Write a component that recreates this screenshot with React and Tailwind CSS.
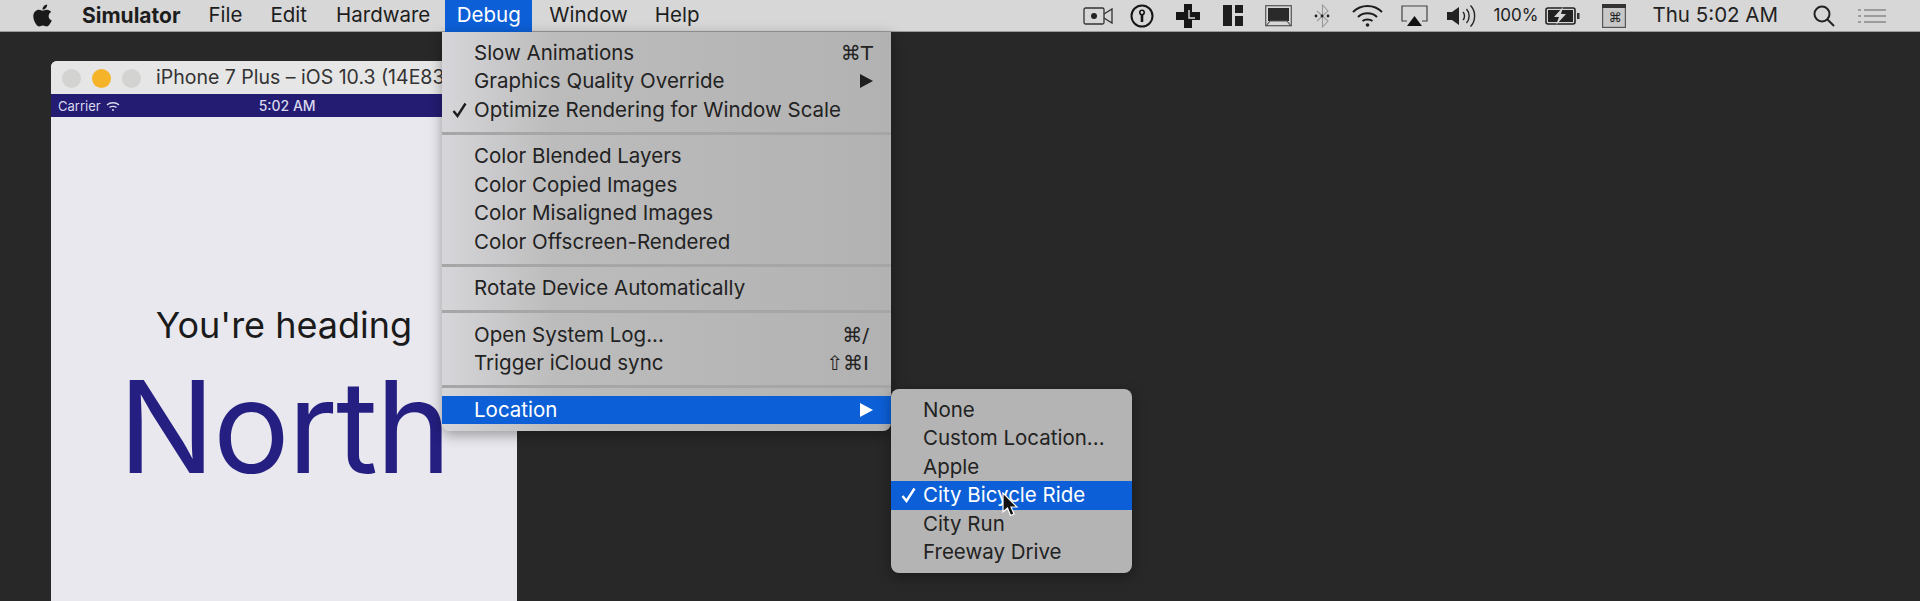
import React from 'react';
import { FaApple } from 'react-icons/fa';

const leftMenus = [
  { label: 'File', className: 'ml-[28px]' },
  { label: 'Edit', className: 'ml-[28px]' },
  { label: 'Hardware', className: 'ml-[29px]' },
];

const debugGroups = [
  [
    { label: 'Slow Animations', shortcut: '⌘T' },
    { label: 'Graphics Quality Override', arrow: true },
    { label: 'Optimize Rendering for Window Scale', checked: true },
  ],
  [
    { label: 'Color Blended Layers' },
    { label: 'Color Copied Images' },
    { label: 'Color Misaligned Images' },
    { label: 'Color Offscreen-Rendered' },
  ],
  [{ label: 'Rotate Device Automatically' }],
  [
    { label: 'Open System Log...', shortcut: '⌘/', shortcutClass: 'mr-[4px]' },
    { label: 'Trigger iCloud sync', shortcut: '⇧⌘I', shortcutClass: 'mr-[4px]' },
  ],
  [{ label: 'Location', arrow: true, active: true }],
];

const locations = [
  { label: 'None' },
  { label: 'Custom Location...' },
  { label: 'Apple' },
  { label: 'City Bicycle Ride', checked: true, active: true },
  { label: 'City Run' },
  { label: 'Freeway Drive' },
];

const Check = ({ color }) => (
  <svg width="15" height="16" viewBox="0 0 15 16" className="absolute left-[10px] top-[6px]">
    <path d="M1.5 9 L5.5 14 L13.5 1.5" fill="none" stroke={color} strokeWidth="2.4" />
  </svg>
);

const MenuRow = ({ item, textLeft }) => (
  <div
    className={`relative flex h-[28.5px] items-center justify-between pr-[18px] ${
      item.active ? 'bg-[#0c5fd6] text-white' : 'text-[#222222]'
    }`}
    style={{ paddingLeft: textLeft }}
  >
    {item.checked && <Check color={item.active ? '#ffffff' : '#1c1c1c'} />}
    <span>{item.label}</span>
    {item.shortcut && (
      <span className={`font-['DejaVu_Sans',sans-serif] text-[20px] leading-none ${item.shortcutClass || ''}`}>
        {item.shortcut}
      </span>
    )}
    {item.arrow && (
      <svg width="13" height="14" viewBox="0 0 13 14">
        <path d="M0 0 L13 7 L0 14 Z" fill={item.active ? '#ffffff' : '#1e1e1e'} />
      </svg>
    )}
  </div>
);

const CameraIcon = () => (
  <svg width="30" height="22" viewBox="0 0 30 22" fill="none" stroke="#333" strokeWidth="1.3">
    <rect x="1" y="3" width="20" height="16" rx="1.5" />
    <circle cx="11" cy="11" r="3" fill="#222" stroke="none" />
    <path d="M21 9 L29 4 V18 L21 13" />
  </svg>
);

const KeyholeIcon = () => (
  <svg width="24" height="24" viewBox="0 0 24 24" fill="none" stroke="#151515">
    <circle cx="12" cy="12" r="10.5" strokeWidth="2" />
    <circle cx="12" cy="8.5" r="2.2" strokeWidth="1.6" />
    <path d="M12 11 V18" strokeWidth="2.6" />
  </svg>
);

const ClockPlusIcon = () => (
  <svg width="24" height="24" viewBox="0 0 24 24">
    <path d="M8 0 H16 V8 H24 V16 H16 V24 H8 V16 H0 V8 H8 Z" fill="#161616" />
    <path d="M13 6 V14 H19" fill="none" stroke="#d8d8d8" strokeWidth="1.4" />
  </svg>
);

const GridIcon = () => (
  <svg width="20" height="21" viewBox="0 0 20 21" fill="#1d1d1d">
    <rect x="0" y="0" width="9" height="21" />
    <rect x="12" y="0" width="8" height="8" />
    <rect x="12" y="11" width="8" height="10" />
  </svg>
);

const MonitorIcon = () => (
  <svg width="27" height="22" viewBox="0 0 27 22">
    <rect x="0.7" y="0.7" width="25.6" height="20" fill="none" stroke="#555" strokeWidth="1.2" />
    <rect x="3" y="3" width="21" height="13" fill="#2a2a2a" />
    <path d="M1 21 L5 16 H22 L26 21" fill="none" stroke="#555" strokeWidth="1.2" />
  </svg>
);

const BluetoothIcon = () => (
  <svg width="17" height="24" viewBox="0 0 17 24" fill="none">
    <path d="M8.5 1 L14 7 L8.5 12 L14 17 L8.5 23 Z M3 7 L8.5 12 L3 17" stroke="#9a9a9a" strokeWidth="1.1" />
    <circle cx="2" cy="12" r="1.4" fill="#222" />
    <circle cx="8" cy="12" r="1.4" fill="#222" />
    <circle cx="14" cy="12" r="1.4" fill="#222" />
  </svg>
);

const WifiIcon = () => (
  <svg width="31" height="22" viewBox="0 0 31 22" fill="none" stroke="#1e1e1e" strokeWidth="2">
    <path d="M1 7 C9 -1 22 -1 30 7" />
    <path d="M6 12 C11 7 20 7 25 12" />
    <path d="M10.5 16 C13 14 18 14 20.5 16" />
    <circle cx="15.5" cy="20" r="1.8" fill="#1e1e1e" stroke="none" />
  </svg>
);

const AirplayIcon = () => (
  <svg width="27" height="22" viewBox="0 0 27 22">
    <path d="M6 16 H1 V1 H26 V16 H21" fill="none" stroke="#444" strokeWidth="1.2" />
    <path d="M13.5 11 L21 21 H6 Z" fill="#111" />
  </svg>
);

const VolumeIcon = () => (
  <svg width="30" height="24" viewBox="0 0 30 24" fill="none" stroke="#222" strokeWidth="1.4">
    <path d="M1 8 H6 L13 3 V21 L6 16 H1 Z" fill="#222" stroke="none" />
    <path d="M17 8 C19 10 19 14 17 16" />
    <path d="M20.5 5 C24 9 24 15 20.5 19" />
    <path d="M24.5 1.5 C30 7 30 17 24.5 22.5" />
  </svg>
);

const BatteryIcon = () => (
  <svg width="35" height="18" viewBox="0 0 35 18">
    <rect x="1" y="1" width="29" height="16" rx="2" fill="none" stroke="#222" strokeWidth="1.6" />
    <rect x="3" y="3" width="25" height="12" fill="#222" />
    <path d="M18 0 L9 10 H14 L11 18 L21 7 H16 Z" fill="#d8d8d8" />
    <rect x="32" y="6" width="2.5" height="6" fill="#333" />
  </svg>
);

const CommandWindowIcon = () => (
  <svg width="24" height="24" viewBox="0 0 24 24">
    <rect x="0.6" y="0.6" width="22.8" height="22.8" fill="#c8c8c8" stroke="#555" strokeWidth="1.2" />
    <rect x="0" y="0" width="24" height="4" fill="#333" />
    <path d="M8 7 H16 V19 H8 Z" fill="#bdbdbd" />
    <text x="13" y="18" textAnchor="middle" fontSize="13" fontFamily="DejaVu Sans" fill="#222">⌘</text>
  </svg>
);

const SearchIcon = () => (
  <svg width="22" height="22" viewBox="0 0 22 22" fill="none" stroke="#222" strokeWidth="2">
    <circle cx="9" cy="9" r="7.5" />
    <path d="M14.5 14.5 L21 21" />
  </svg>
);

const ListIcon = () => (
  <svg width="28" height="16" viewBox="0 0 28 16" fill="#9c9c9c">
    <rect x="0" y="1" width="3" height="2" />
    <rect x="0" y="7" width="3" height="2" />
    <rect x="0" y="13" width="3" height="2" />
    <rect x="6" y="1" width="22" height="2" />
    <rect x="6" y="7" width="22" height="2" />
    <rect x="6" y="13" width="22" height="2" />
  </svg>
);

const App = () => {
  return (
    <div className="relative h-[601px] w-[1920px] overflow-hidden bg-[#282828] font-['Inter',sans-serif] text-[20.5px] leading-none">
      {/* Menu bar */}
      <div className="flex h-[32px] items-center border-b border-[#9a9a9a] bg-[#d7d7d7] text-[#1d1d1d]">
        <FaApple className="ml-[30px] text-[25px] text-[#1a1a1a]" />
        <span className="ml-[27px] text-[21px] font-bold">Simulator</span>
        {leftMenus.map((menu) => (
          <span key={menu.label} className={menu.className}>{menu.label}</span>
        ))}
        <span className="ml-[15px] flex h-[32px] w-[87px] items-center justify-center bg-[#0c5fd6] text-white">Debug</span>
        <span className="ml-[17px]">Window</span>
        <span className="ml-[27px]">Help</span>

        <div className="ml-auto flex items-center text-[#222222]">
          <CameraIcon />
          <span className="ml-[17px]"><KeyholeIcon /></span>
          <span className="ml-[22px]"><ClockPlusIcon /></span>
          <span className="ml-[23px]"><GridIcon /></span>
          <span className="ml-[22px]"><MonitorIcon /></span>
          <span className="ml-[22px]"><BluetoothIcon /></span>
          <span className="ml-[21px]"><WifiIcon /></span>
          <span className="ml-[18px]"><AirplayIcon /></span>
          <span className="ml-[18px]"><VolumeIcon /></span>
          <span className="ml-[17px] text-[17px]">100%</span>
          <span className="ml-[6px]"><BatteryIcon /></span>
          <span className="ml-[22px]"><CommandWindowIcon /></span>
          <span className="ml-[27px] whitespace-nowrap">Thu 5:02 AM</span>
          <span className="ml-[35px]"><SearchIcon /></span>
          <span className="ml-[23px] mr-[34px]"><ListIcon /></span>
        </div>
      </div>

      {/* Simulator window */}
      <div className="ml-[51px] mt-[29px] h-[540px] w-[466px] overflow-hidden rounded-t-[6px] bg-[#e8e8ee]">
        <div className="flex h-[33px] items-center bg-[#e6e6e6] pl-[11px] pt-[1px]">
          <span className="h-[19px] w-[19px] rounded-full bg-[#d3d3d1]" />
          <span className="ml-[11px] h-[19px] w-[19px] rounded-full bg-[#f5b32a]" />
          <span className="ml-[11px] h-[19px] w-[19px] rounded-full bg-[#d3d3d1]" />
          <span className="ml-[15px] whitespace-nowrap text-[19.5px] text-[#333333]">iPhone 7 Plus – iOS 10.3 (14E8301)</span>
        </div>
        <div className="flex h-[23px] items-center bg-[#241c73] pl-[7px] pt-[1px] text-[13px] text-[#d9d9ee]">
          <span>Carrier</span>
          <svg width="14" height="11" viewBox="0 0 14 11" className="ml-[5px]" fill="none" stroke="#d9d9ee" strokeWidth="1.3">
            <path d="M1 4 C4 1 10 1 13 4" />
            <path d="M3.5 6.5 C5 5 9 5 10.5 6.5" />
            <circle cx="7" cy="9" r="1" fill="#d9d9ee" stroke="none" />
          </svg>
          <span className="ml-[139px] text-[14px] font-medium">5:02 AM</span>
        </div>
        <div className="flex flex-col items-center pt-[186px]">
          <span className="text-[36px] leading-[44px] text-[#1a1a1a]">You're heading</span>
          <span className="mt-[10px] text-[128px] leading-[140px] tracking-[-2px] text-[#241f80]">North</span>
        </div>
      </div>

      {/* Debug menu */}
      <div className="absolute left-[442px] top-[32px] w-[449px] rounded-b-[8px] bg-gradient-to-r from-[#d6d6da] via-[#bcbcbc] via-25% to-[#b2b2b2] py-[6.5px] shadow-[0_4px_14px_rgba(0,0,0,0.35)]">
        {debugGroups.map((group, i) => (
          <div key={i}>
            {i > 0 && (
              <div className="flex h-[18px] items-center">
                <div className="h-[3px] w-full bg-[#a6a6a6]" />
              </div>
            )}
            {group.map((item) => (
              <MenuRow key={item.label} item={item} textLeft={32} />
            ))}
          </div>
        ))}
      </div>

      {/* Location submenu */}
      <div className="absolute left-[891px] top-[389px] w-[241px] rounded-[8px] bg-[#b4b4b4] py-[6.5px] shadow-[0_4px_14px_rgba(0,0,0,0.35)]">
        {locations.map((item) => (
          <MenuRow key={item.label} item={item} textLeft={32} />
        ))}
      </div>

      {/* Mouse cursor */}
      <svg width="18" height="26" viewBox="0 0 18 26" className="absolute left-[1001px] top-[492px]">
        <path d="M2 1 V20 L6.5 16 L9.5 23.5 L13 22 L10 15 H16 Z" fill="#111111" stroke="#ffffff" strokeWidth="1.2" />
      </svg>
    </div>
  );
};

export default App;
